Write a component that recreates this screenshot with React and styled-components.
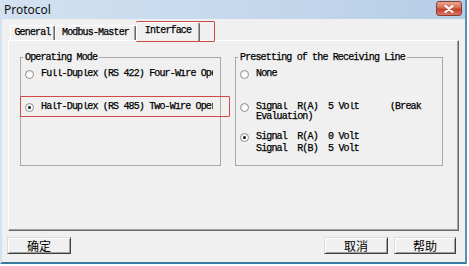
import React from "react";
import styled, { createGlobalStyle } from "styled-components";

const Global = createGlobalStyle`
  html, body { margin: 0; padding: 0; background: #ffffff; }
  body { width: 469px; height: 266px; overflow: hidden; }
  * { box-sizing: border-box; }
`;

const MONO = `"Liberation Mono", "Courier New", monospace`;
const CJK = `"Noto Sans CJK SC", "Noto Sans", sans-serif`;

const Window = styled.div`
  position: relative;
  width: 467px;
  height: 264px;
  display: flex;
  flex-direction: column;
  background: #f0f0f0;
  border-left: 2px solid #d3e2f1;
  border-right: 2px solid #5b8db5;
  border-bottom: 2px solid #3a7ca0;
`;

const TitleBar = styled.div`
  height: 19px;
  flex: none;
  display: flex;
  align-items: flex-start;
  justify-content: space-between;
  padding: 0 3px 0 2px;
  background: linear-gradient(to right, #d2e1f1, #c3d7ec 60%, #b6cde6);
`;

const Title = styled.div`
  font-family: "Noto Sans", sans-serif;
  font-size: 12px;
  line-height: 19px;
  color: #111;
`;

const CloseButton = styled.div`
  width: 26px;
  height: 15px;
  margin-top: 1px;
  border: 1px solid #8c3b2d;
  border-radius: 3px;
  background: linear-gradient(#e9a894, #d46b53 45%, #c2412a 55%, #d9786a);
  display: flex;
  align-items: center;
  justify-content: center;
`;

const Body = styled.div`
  flex: 1;
  display: flex;
  flex-direction: column;
  padding: 3px 6px 0 6px;
`;

const TabStrip = styled.div`
  height: 18px;
  display: flex;
  align-items: flex-end;
  padding-left: 2px;
  position: relative;
  z-index: 1;
`;

const MonoText = `
  font-family: ${MONO};
  font-size: 10px;
  font-weight: 400;
  letter-spacing: -0.85px;
  color: #000;
  -webkit-text-stroke: 0.25px #000;
`;

const Tab = styled.div`
  width: ${(p) => p.$w}px;
  height: ${(p) => (p.$active ? 19 : 15)}px;
  margin-bottom: ${(p) => (p.$active ? -1 : 0)}px;
  background: #f0f0f0;
  border-top: 1px solid #ffffff;
  border-left: 1px solid #ffffff;
  border-right: 1px solid #696969;
  box-shadow: inset -1px 0 #a0a0a0;
  border-radius: 2px 2px 0 0;
  ${MonoText}
  text-align: center;
  line-height: ${(p) => (p.$active ? 16 : 14)}px;
  white-space: nowrap;
`;

const Panel = styled.div`
  height: 191px;
  display: flex;
  align-items: flex-start;
  gap: 14px;
  padding: 11px 0 0 11px;
  border: 1px solid;
  border-color: #ffffff #696969 #696969 #ffffff;
  box-shadow: inset -1px -1px #a0a0a0;
`;

const Group = styled.fieldset`
  margin: 0;
  width: ${(p) => p.$w}px;
  height: 114px;
  padding: 0 7px 0 ${(p) => p.$pl}px;
  border: 1px solid #a9a9a9;
  display: flex;
  flex-direction: column;
  min-width: 0;
`;

const Legend = styled.legend`
  ${MonoText}
  line-height: 11px;
  padding: 0 2px;
  margin-left: -2px;
`;

const RadioRow = styled.div`
  display: flex;
  align-items: flex-start;
  gap: 7px;
  margin-top: ${(p) => p.$mt}px;
  min-width: 0;
`;

const RadioCircle = styled.span`
  flex: none;
  width: 9px;
  height: 9px;
  margin-top: ${(p) => (p.$lh - 9) / 2}px;
  border-radius: 50%;
  border: 1px solid #8e8f8f;
  background: radial-gradient(circle at 60% 65%, #ffffff 30%, #e4e4e4 100%);
  display: flex;
  align-items: center;
  justify-content: center;
  &::after {
    content: "";
    display: ${(p) => (p.$checked ? "block" : "none")};
    width: 3px;
    height: 3px;
    border-radius: 50%;
    background: #111;
  }
`;

const RadioLabel = styled.span`
  flex: 1;
  min-width: 0;
  overflow: hidden;
  white-space: pre;
  ${MonoText}
  line-height: ${(p) => p.$lh}px;
`;

const ButtonRow = styled.div`
  display: flex;
  gap: 6px;
  margin-top: 6px;
  padding-right: 3px;
  margin-left: -1px;
`;

const Spacer = styled.div`
  flex: 1;
`;

const Button = styled.div`
  width: ${(p) => p.$w}px;
  height: 17px;
  border: 1px solid;
  border-color: #dcdcdc #404040 #404040 #dcdcdc;
  box-shadow: inset 1px 1px #ffffff, inset -1px -1px #a0a0a0;
  background: #f0f0f0;
  font-family: ${CJK};
  font-size: 12px;
  line-height: 15px;
  text-align: center;
  color: #000;
`;

const Annotation = styled.div`
  position: absolute;
  left: ${(p) => p.$x}px;
  top: ${(p) => p.$y}px;
  width: ${(p) => p.$w}px;
  height: ${(p) => p.$h}px;
  border: 1.5px solid #d04848;
  border-radius: 1px;
  pointer-events: none;
`;

function Radio({ checked, lines, lh = 10, mt = 0 }) {
  return (
    <RadioRow $mt={mt}>
      <RadioCircle $checked={checked} $lh={lh} />
      <RadioLabel $lh={lh}>{lines.join("\n")}</RadioLabel>
    </RadioRow>
  );
}

export default function App() {
  return (
    <>
      <Global />
      <Window>
        <TitleBar>
          <Title>Protocol</Title>
          <CloseButton>
            <svg width="10" height="8" viewBox="0 0 10 8">
              <path d="M1.5 1 L8.5 7 M8.5 1 L1.5 7" stroke="#ffffff" strokeWidth="2" strokeLinecap="round" />
            </svg>
          </CloseButton>
        </TitleBar>
        <Body>
          <TabStrip>
            <Tab $w={45}>General</Tab>
            <Tab $w={81}>Modbus-Master</Tab>
            <Tab $w={64} $active>Interface</Tab>
          </TabStrip>
          <Panel>
            <Group $w={201} $pl={4}>
              <Legend>Operating Mode</Legend>
              <Radio mt={6} lines={["Full-Duplex (RS 422) Four-Wire Operation"]} />
              <Radio mt={23} checked lines={["Half-Duplex (RS 485) Two-Wire Operation"]} />
            </Group>
            <Group $w={208} $pl={4}>
              <Legend>Presetting of the Receiving Line</Legend>
              <Radio mt={6} lines={["None"]} />
              <Radio mt={23} lines={["Signal  R(A)  5 Volt      (Break", "Evaluation)"]} />
              <Radio mt={9} lh={12} checked lines={["Signal  R(A)  0 Volt", "Signal  R(B)  5 Volt"]} />
            </Group>
          </Panel>
          <ButtonRow>
            <Button $w={64}>确定</Button>
            <Spacer />
            <Button $w={64}>取消</Button>
            <Button $w={62}>帮助</Button>
          </ButtonRow>
        </Body>
        <Annotation $x={134} $y={21} $w={79} $h={21} />
        <Annotation $x={18} $y={96} $w={210} $h={21} />
      </Window>
    </>
  );
}
